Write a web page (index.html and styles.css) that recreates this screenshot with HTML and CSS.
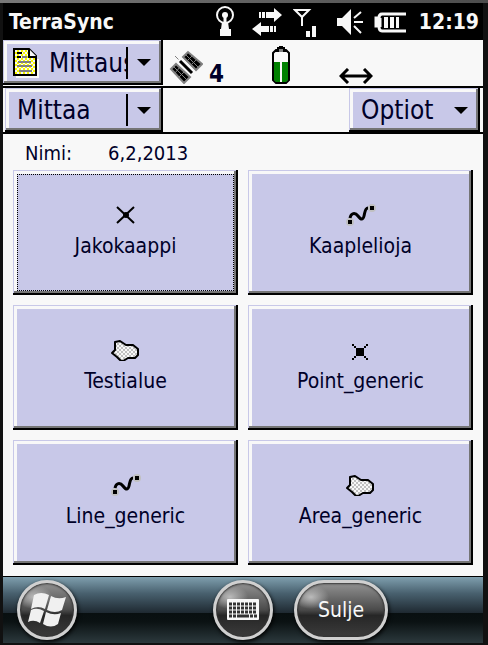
FILE: index.html
```html
<!DOCTYPE html>
<html lang="fi">
  <head>
    <meta charset="UTF-8">
    <meta name="viewport" content="width=device-width, initial-scale=1.0">
    <title>TerraSync</title>
    <link rel="stylesheet" href="styles.css">
  </head>
  <body>

    <!-- Shared feature icons -->
    <svg class="defs" width="0" height="0" aria-hidden="true">
      <defs>
        <pattern id="hatch" width="4" height="4" patternUnits="userSpaceOnUse">
          <rect width="4" height="4" fill="#c0c0c0"/>
          <path d="M0 0h2v2h-2zM2 2h2v2h-2z" fill="#f8f8f8"/>
        </pattern>
        <pattern id="paper" width="4" height="4" patternUnits="userSpaceOnUse">
          <rect width="4" height="4" fill="#f8f800"/>
          <path d="M0 0h2v2h-2zM2 2h2v2h-2z" fill="#f8f8f8"/>
        </pattern>
        <symbol id="line" viewBox="0 0 30 22">
          <circle cx="4" cy="18" r="4" fill="#c0c0c0"/>
          <circle cx="26" cy="4" r="4" fill="#c0c0c0"/>
          <path d="M4 14c1-5 5-6 8-2s5 4 6 0s1-8 4-8" fill="none" stroke="#000" stroke-width="3"/>
          <path d="M2 16h4v4h-4zM24 2h4v4h-4z"/>
        </symbol>
        <symbol id="area" viewBox="0 0 30 22">
          <path d="M4 3l5-1l6 4h7l5 4v6l-3 3h-7l-5 3h-2l-4-4l-5-4l3-3z" fill="url(#hatch)" stroke="#000" stroke-width="2" stroke-linejoin="round"/>
        </symbol>
      </defs>
    </svg>

    <main class="screen">
      <header class="status">
        <h1>TerraSync</h1>
        <div class="tray">
          <svg width="20" height="32" viewBox="0 0 20 32" fill="none" stroke="#f8f8f8">
            <circle cx="10" cy="9" r="8" stroke-width="2"/>
            <circle cx="10" cy="9" r="3" fill="#f8f8f8" stroke="none"/>
            <path d="M10 10v8" stroke-width="3"/>
            <path d="M7 16h6l1 7h2v7h-11v-7h1z" fill="#f8f8f8" stroke="none"/>
          </svg>
          <svg width="32" height="32" viewBox="0 0 32 32" fill="#f8f8f8">
            <path d="M7 6h2v6h-2zM10 6h3v6h-3zM14 6h8v-4l8 7l-8 7v-4h-8z"/>
            <path d="M24 20h-2v6h2zM21 20h-3v6h3zM17 20h-8v-4l-9 7l9 7v-4h8z"/>
          </svg>
          <svg width="26" height="32" viewBox="0 0 26 32" fill="none" stroke="#f8f8f8" stroke-width="2">
            <path d="M2 4h14l-7 7zM9 10v10"/>
            <path d="M13 25h4v6h-4zM19 20h4v11h-4z" fill="#f8f8f8" stroke="none"/>
          </svg>
          <svg width="28" height="32" viewBox="0 0 28 32" fill="none" stroke="#f8f8f8" stroke-width="2">
            <path d="M1 12h5l9-9v26l-9-9h-5z" fill="#f8f8f8" stroke="none"/>
            <path d="M18 12l7-6M18 16h9M18 20l7 7"/>
          </svg>
          <svg width="34" height="32" viewBox="0 0 34 32" fill="none" stroke="#f8f8f8" stroke-width="3">
            <path d="M33 8h-24q-3 0-3 4h-3v8h3q0 5 3 5h24"/>
            <path d="M6 12v9" stroke-width="5"/>
            <path d="M11 11h4v11h-4zM17 11h4v11h-4zM23 11h3v11h-3z" fill="#f8f8f8" stroke="none"/>
          </svg>
          <time class="clock">12:19</time>
        </div>
      </header>

      <div class="bar">
        <div class="combo">
          <svg class="doc" width="26" height="30" viewBox="0 0 26 30">
            <path d="M3 29h22v-18" fill="none" stroke="#f8f8f8" stroke-width="2"/>
            <path d="M1 1h15l7 7v19h-22z" fill="url(#paper)" stroke="#000" stroke-width="2"/>
            <path d="M16 1v8h8" fill="#f8f8f8" stroke="#000" stroke-width="2"/>
            <path d="M4 5h5M4 9h4" stroke="#000" stroke-width="2"/>
            <path d="M9 9h5M5 14h13M4 18h15M6 23h13" stroke="#808080" stroke-width="2"/>
          </svg>
          <select aria-label="Osio"><option>Mittaus</option></select>
          <span class="split"></span>
          <span class="arrow"></span>
        </div>
        <div class="gps">
          <svg width="34" height="34" viewBox="0 0 34 34">
            <path d="M2 19l5-5l14 13l-6 6z" fill="#000" stroke="#808080" stroke-width="2"/>
            <path d="M14 7l5-5l14 12l-6 6z" fill="#000" stroke="#808080" stroke-width="2"/>
            <path d="M5 17l13 13M17 5l12 12M6 23l5-6M10 27l6-6M19 10l5-5M23 14l5-5" stroke="#808080" stroke-width="1"/>
            <path d="M6 6l7 7" stroke="#808080" stroke-width="1"/>
            <path d="M10 9l14 14" stroke="#f8f8f8" stroke-width="6"/>
            <path d="M11 11l12 12" stroke="#000" stroke-width="3"/>
          </svg>
          <strong class="count">4</strong>
          <svg class="cell" width="18" height="38" viewBox="0 0 18 38">
            <path d="M4 4h10l3 3v27l-3 3h-10l-3-3v-27z" fill="#f8f8f8" stroke="#000" stroke-width="2"/>
            <path d="M2 16h6v20h-4l-2-2zM10 16h6v18l-2 2h-4z" fill="#008000"/>
            <path d="M3 5h3v-3h2v-1h2v1h2v3h3" fill="none" stroke="#000" stroke-width="2"/>
            <path d="M7 3h4v3h-4z" fill="#808080"/>
          </svg>
          <svg class="link" width="34" height="16" viewBox="0 0 34 16" fill="none" stroke="#000" stroke-width="3">
            <path d="M2 8h30M9 1l-7 7l7 7M25 1l7 7l-7 7"/>
          </svg>
        </div>
      </div>

      <div class="bar second">
        <div class="combo">
          <select aria-label="Tila"><option>Mittaa</option></select>
          <span class="split"></span>
          <span class="arrow"></span>
        </div>
        <div class="combo options">
          <select aria-label="Optiot"><option>Optiot</option></select>
          <span class="arrow"></span>
        </div>
      </div>

      <section class="features">
        <p class="file"><span>Nimi:</span> <span>6,2,2013</span></p>
        <div class="grid">
          <button type="button" class="feature focused">
            <svg width="30" height="22" viewBox="0 0 30 22">
              <path d="M6 3l17 16M23 3l-17 16" stroke="#000" stroke-width="2"/>
              <circle cx="15" cy="11" r="3"/>
            </svg>
            Jakokaappi
          </button>
          <button type="button" class="feature">
            <svg width="30" height="22"><use href="#line"/></svg>
            Kaaplelioja
          </button>
          <button type="button" class="feature">
            <svg width="30" height="22"><use href="#area"/></svg>
            Testialue
          </button>
          <button type="button" class="feature">
            <svg width="30" height="22" viewBox="0 0 30 22" shape-rendering="crispEdges">
              <path d="M10 9h8v8h-8zM6 5h2v2h-2zM8 7h2v2h-2zM20 5h2v2h-2zM18 7h2v2h-2zM8 17h2v2h-2zM6 19h2v2h-2zM18 17h2v2h-2zM20 19h2v2h-2z"/>
            </svg>
            Point_generic
          </button>
          <button type="button" class="feature">
            <svg width="30" height="22"><use href="#line"/></svg>
            Line_generic
          </button>
          <button type="button" class="feature">
            <svg width="30" height="22"><use href="#area"/></svg>
            Area_generic
          </button>
        </div>
      </section>

      <footer class="softkeys">
        <button type="button" class="key start" aria-label="Start">
          <svg width="38" height="36" viewBox="0 0 38 36" fill="#f0f0f0">
            <path d="M6 3q7-4 15 0l-4 14q-7-4-14 0z"/>
            <path d="M23 4q7 4 15 1l-4 13q-7 4-15 0z"/>
            <path d="M3 18q6-3 13 1l-4 12q-6-4-12-1z"/>
            <path d="M18 20q8 4 15 1l-3 11q-7 5-15 0z"/>
          </svg>
        </button>
        <button type="button" class="key" aria-label="Näppäimistö">
          <svg width="32" height="22" viewBox="0 0 32 22">
            <rect width="32" height="21" rx="1" fill="#f8f8f8"/>
            <path d="M2 5h28M2 9h28M2 13h28" stroke="#333" stroke-width="3" stroke-dasharray="3 1"/>
            <path d="M2 17h3M6 17h3M10 17h12M23 17h3M27 17h3" stroke="#333" stroke-width="3"/>
          </svg>
        </button>
        <button type="button" class="key close">Sulje</button>
      </footer>
    </main>

  </body>
</html>
```

FILE: styles.css
```css
* {
  box-sizing: border-box;
}

body {
  margin: 0;
  padding: 3px 5px 2px 3px;
  min-height: 100vh;
  display: flex;
  font-family: "DejaVu Sans Condensed", "DejaVu Sans", sans-serif;
  font-size: 21px;
  color: #000028;
  background: linear-gradient(90deg, #777, #4d4d4d) top / 100% 3px no-repeat, #111;
}

button, select {
  font: inherit;
  color: inherit;
  margin: 0;
  border: none;
}

.defs {
  position: absolute;
}

/* Screen */
.screen {
  flex: 1;
  min-width: 0;
  display: flex;
  flex-direction: column;
  background: #f8f8f8;
}

/* Status bar */
.status {
  display: flex;
  align-items: center;
  justify-content: space-between;
  height: 37px;
  padding: 0 4px 0 6px;
  color: #f8f8f8;
  background: #000;
}

h1 {
  margin: 0;
  font-size: 21px;
}

.tray {
  display: flex;
  align-items: center;
  gap: 9px;
}

.tray svg:nth-child(1), .tray svg:nth-child(3) {
  margin-right: 8px;
}

.clock {
  margin-left: 3px;
  font-weight: bold;
}

/* Toolbars */
.bar {
  display: flex;
  height: 48px;
  padding-bottom: 1px;
  border-bottom: 2px solid #000;
}

.second {
  height: 46px;
  padding: 0 3px 0 2px;
  justify-content: space-between;
}

.combo {
  display: flex;
  align-items: center;
  width: 160px;
  padding: 4px;
  background: #c8c8e8;
}

.combo, .feature {
  box-shadow: inset -2px -2px #000, inset 1px 1px #c8c8e8, inset -4px -4px #757575, inset 4px 4px #f8f8f8;
}

.combo select {
  flex: 1;
  min-width: 0;
  padding: 0 0 0 8px;
  font-size: 26px;
  appearance: none;
  background: none;
  text-overflow: clip;
}

.second .combo {
  width: 158px;
}

.second .options {
  width: 131px;
}

.doc {
  flex: none;
  margin: 0 2px 0 6px;
}

.split {
  width: 2px;
  height: 32px;
  background: #000;
}

.arrow {
  border: 7px solid transparent;
  border-top-color: #000;
  border-bottom: none;
  margin: 0 8px 0 9px;
}

.gps {
  display: flex;
  flex: 1;
  align-items: flex-end;
  padding: 0 0 1px 6px;
}

.count {
  margin-left: 6px;
  font-size: 24px;
  line-height: 20px;
}

.cell {
  margin-left: 48px;
}

.link {
  margin-left: 49px;
}

/* Feature list */
.features {
  flex: 1;
  padding: 6px 10px 11px;
}

.file {
  display: flex;
  gap: 36px;
  margin: 0 0 4px;
  padding-left: 12px;
  font-size: 20px;
  line-height: 26px;
}

.grid {
  display: grid;
  grid-template-columns: 1fr 1fr;
  grid-auto-rows: 125px;
  gap: 10px;
}

.feature {
  display: flex;
  flex-direction: column;
  align-items: center;
  justify-content: center;
  gap: 8px;
  padding: 0 0 4px;
  line-height: 24px;
  background: #c8c8e8;
}

.feature svg {
  overflow: visible;
}

.focused {
  outline: 1px dotted #000;
  outline-offset: -5px;
}

/* Bottom bar */
.softkeys {
  display: grid;
  grid-template-columns: 1fr auto 1fr;
  align-items: center;
  gap: 21px;
  height: 67px;
  padding: 0 14px;
  border-top: 1px solid #000;
  background: linear-gradient(#7f9fae, #48606e 25%, #1f2a32 54%, #080f10 55%, #0b1213 68%, #2c393d);
}

.key {
  display: flex;
  align-items: center;
  justify-content: center;
  width: 60px;
  height: 60px;
  padding: 0;
  color: #f8f8f8;
  border: 3px solid #d0d0d0;
  border-radius: 30px;
  background: radial-gradient(ellipse 18px 12px at 14px 14px, #bbb, transparent), linear-gradient(#929292, #4a4a4a 50%, #262626 60%, #3c3c3c);
  box-shadow: 1px 2px 4px #000, inset 0 0 2px 1px #333;
}

.close {
  width: 94px;
}
```
